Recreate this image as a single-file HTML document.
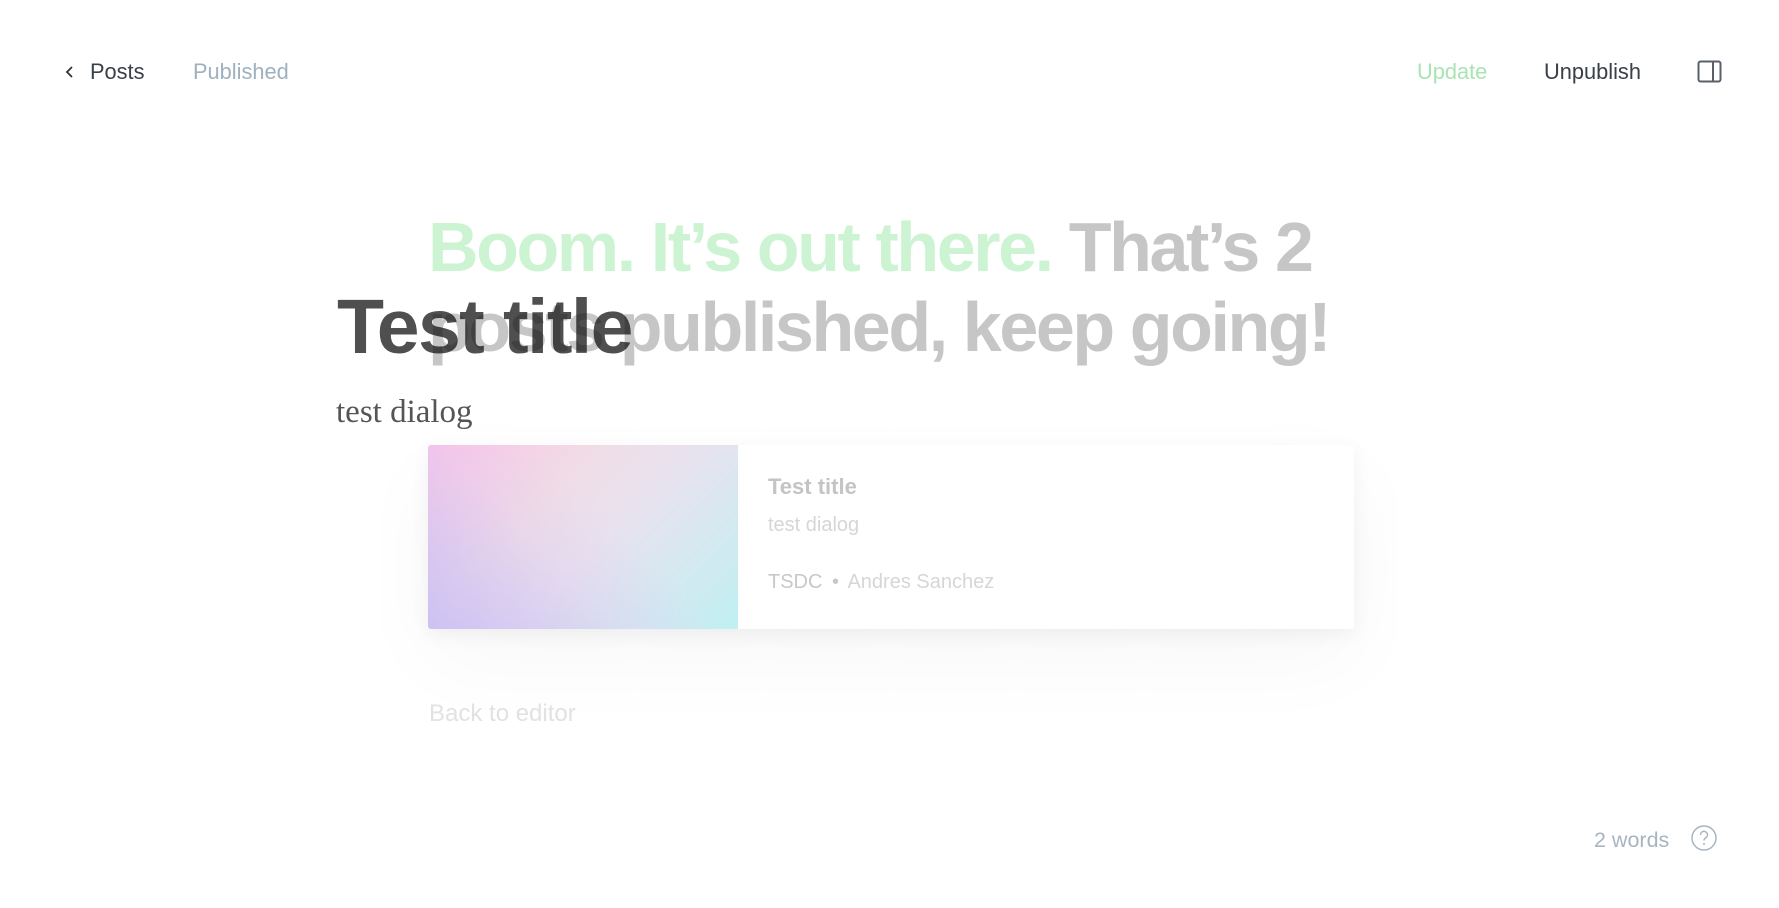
<!DOCTYPE html>
<html><head><meta charset="utf-8"><style>
html,body{margin:0;padding:0;width:1779px;height:908px;overflow:hidden;background:#fff;font-family:"Liberation Sans",sans-serif;}
.a{position:absolute;white-space:nowrap;}
.nav{font-size:21.8px;top:59px;line-height:26px;}
</style></head><body>
<svg class="a" style="left:64px;top:64px" width="12" height="16" viewBox="0 0 12 16"><path d="M8 3 L3 8 L8 13" fill="none" stroke="#333" stroke-width="1.8"/></svg>
<div class="a nav" style="left:90px;color:#394047">Posts</div>
<div class="a nav" style="left:193px;color:#9fb0c0">Published</div>
<div class="a nav" style="left:1417px;color:#a8e4b4">Update</div>
<div class="a nav" style="left:1544px;color:#394047">Unpublish</div>
<svg class="a" style="left:1697px;top:60px" width="26" height="24" viewBox="0 0 26 24"><rect x="1.5" y="1.5" width="22" height="20" rx="2" fill="none" stroke="#5a6068" stroke-width="2"/><line x1="16" y1="2" x2="16" y2="21" stroke="#5a6068" stroke-width="2"/></svg>

<div class="a" style="left:428px;top:207px;font-size:70px;font-weight:bold;line-height:80px;letter-spacing:-2.4px;color:#c6c6c6">
<span style="color:#ccf3d2">Boom. It’s out there.</span> That’s 2<br>posts published, keep going!</div>

<div class="a" style="left:337px;top:282px;font-size:77px;font-weight:bold;letter-spacing:-1.6px;line-height:90px;color:rgba(20,20,20,0.75)">Test title</div>
<div class="a" style="left:336px;top:392px;font-family:'Liberation Serif',serif;font-size:33px;color:#555;line-height:40px">test dialog</div>

<div class="a" style="left:428px;top:445px;width:926px;height:184px;background:#fff;border-radius:3px;box-shadow:0 6px 20px rgba(0,0,0,0.05),0 30px 90px rgba(0,0,0,0.035);overflow:hidden">
<div style="position:absolute;left:0;top:0;width:310px;height:184px;background:linear-gradient(135deg,#fdc3e8 0%,#f0dde6 35%,#e8e2ef 55%,#bff0f2 100%)"></div>
<div style="position:absolute;left:0;top:0;width:310px;height:184px;background:linear-gradient(45deg,rgba(200,190,245,0.9) 0%,rgba(220,200,240,0.3) 40%,rgba(255,255,255,0) 60%)"></div>
<div class="a" style="left:340px;top:29px;font-size:22px;font-weight:bold;color:#c4c4c4">Test title</div>
<div class="a" style="left:340px;top:69px;font-size:20px;color:#d6d6d6">test dialog</div>
<div class="a" style="left:340px;top:126px;font-size:20px;color:#c8c8c8">TSDC <span style="margin:0 4px">•</span> <span style="color:#d6d6d6">Andres Sanchez</span></div>
</div>

<div class="a" style="left:429px;top:700px;font-size:24px;color:#e2e2e2">Back to editor</div>

<div class="a" style="left:1594px;top:828px;font-size:21.5px;color:#a8b4c0">2 words</div>
<svg class="a" style="left:1690px;top:824px" width="28" height="28" viewBox="0 0 28 28"><circle cx="14" cy="14" r="12" fill="none" stroke="#a8b4c0" stroke-width="1.5"/><path d="M10.5 11 a3.5 3.5 0 1 1 5 3 c-1 .6 -1.5 1.2 -1.5 2.5" fill="none" stroke="#a8b4c0" stroke-width="1.5"/><circle cx="14" cy="20" r="1" fill="#a8b4c0"/></svg>
</body></html>
